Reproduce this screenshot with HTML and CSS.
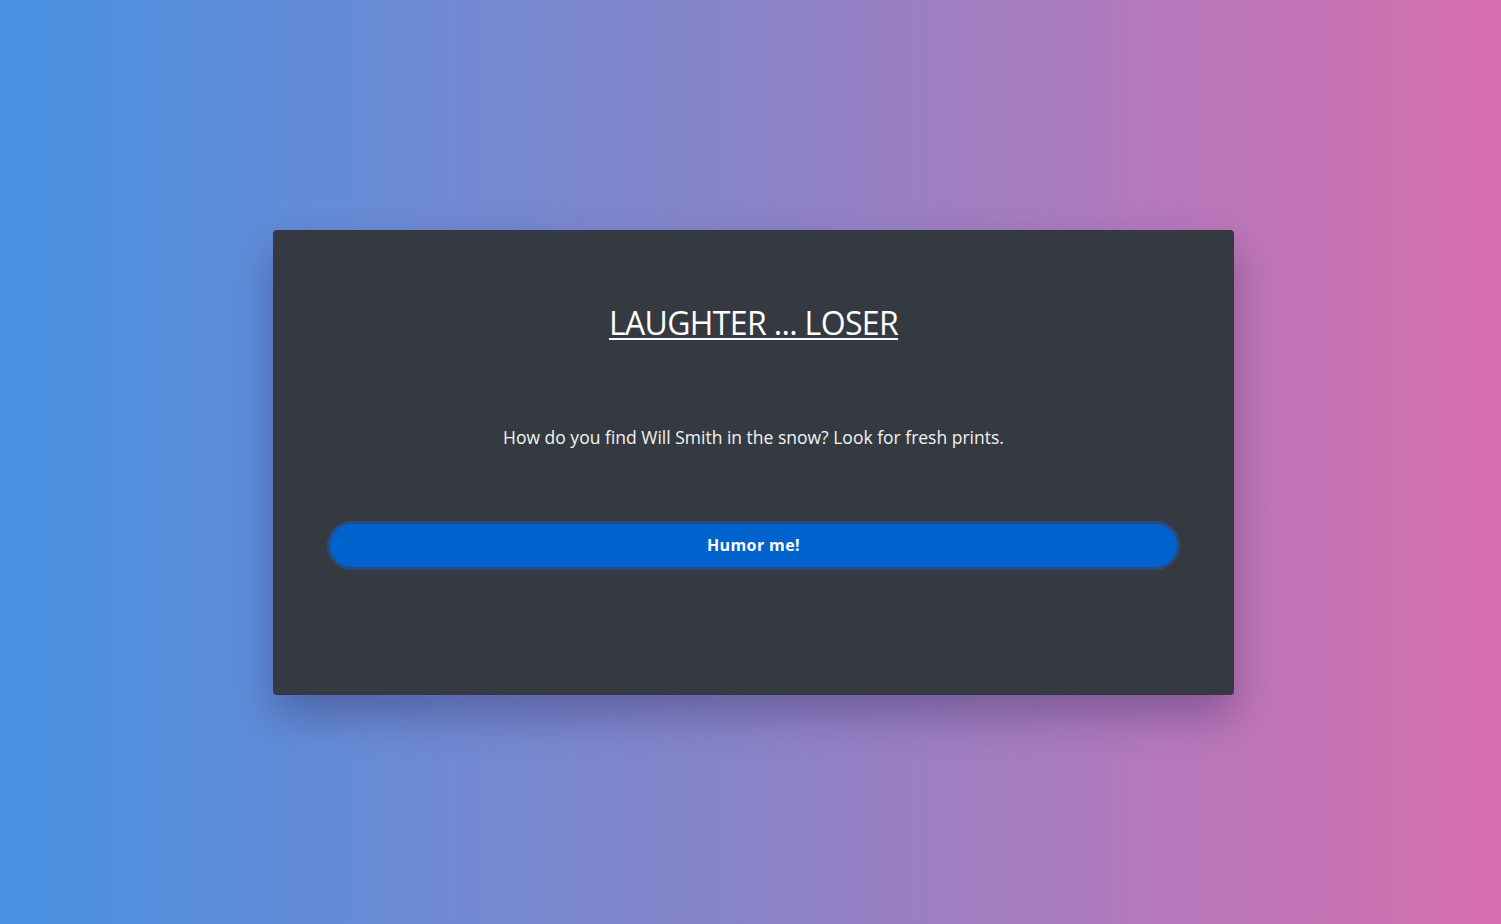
FILE: index.html
```html
<!DOCTYPE html>
<html>
<head>
<meta charset="utf-8">
<link rel="stylesheet" href="styles.css">
</head>
<body>
<main class="page">
  <section class="card">
    <h1 class="title"><a href="#">LAUGHTER ... LOSER</a></h1>
    <p class="joke">How do you find Will Smith in the snow? Look for fresh prints.</p>
    <button class="btn">Humor me!</button>
  </section>
</main>
</body>
</html>
```

FILE: styles.css
```css
html, body {
  margin: 0;
  height: 100%;
}
body {
  background: linear-gradient(90deg, #4891e2 0%, #8a84c8 50%, #d86fb0 100%);
  font-family: "Open Sans", "Noto Sans", sans-serif;
}
.page {
  height: 100%;
  display: flex;
  align-items: center;
  justify-content: center;
  padding-left: 6px;
  box-sizing: border-box;
}
.card {
  width: 961px;
  height: 465px;
  box-sizing: border-box;
  background: #353a42;
  border-radius: 4px;
  box-shadow: 0 20px 40px rgba(40, 30, 80, 0.35);
  padding: 74px 57px 0;
  text-align: center;
}
.title {
  margin: 0;
  font-size: 32px;
  font-weight: 400;
  line-height: 38px;
  letter-spacing: -0.65px;
}
.title a {
  color: #ffffff;
  text-decoration: underline;
  text-underline-offset: 3px;
  text-decoration-thickness: 2px;
}
.joke {
  margin: 83px 0 0;
  color: #f2f2f2;
  font-size: 17.5px;
  line-height: 24px;
}
.btn {
  display: block;
  width: 100%;
  margin-top: 75px;
  height: 43px;
  border-radius: 22px;
  border: none;
  background: #0062cc;
  box-shadow: 0 0 0 3px rgba(38, 80, 140, 0.8);
  color: #ffffff;
  font-family: "Open Sans", sans-serif;
  font-weight: 700;
  font-size: 16px;
  letter-spacing: 0.4px;
}
```
